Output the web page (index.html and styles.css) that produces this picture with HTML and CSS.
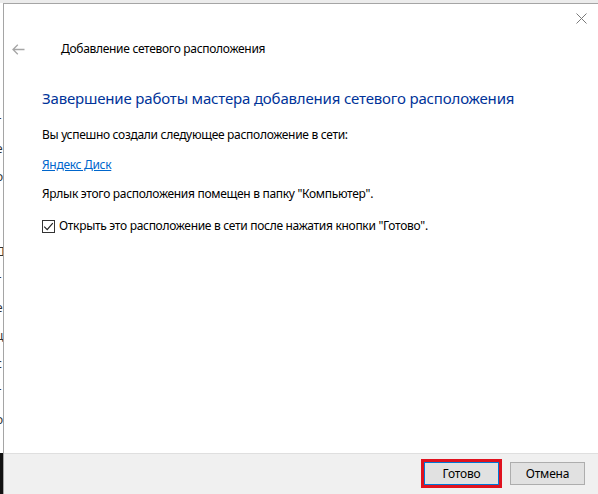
FILE: index.html
```html
<!DOCTYPE html>
<html lang="ru">
<head>
<meta charset="utf-8">
<title>Добавление сетевого расположения</title>
<link rel="stylesheet" href="styles.css">
</head>
<body>
<div class="screen">
  <div class="topstrip"></div>
  <div class="backdrop">
    <div class="backdrop-text">
      <span>г</span><span>е</span><span>о</span>
      <span class="gap">Д</span><span>г</span><span>е</span><span>ц</span><span>с</span><span>г</span><span>о</span>
    </div>
    <div class="taskbar"></div>
  </div>
  <div class="window">
    <div class="topbar">
      <svg class="close" width="11" height="11" viewBox="0 0 11 11" aria-label="Закрыть"><path d="M0.5 0.5 L10.5 10.5 M10.5 0.5 L0.5 10.5" stroke="#7a7a7a" stroke-width="1" fill="none"/></svg>
    </div>
    <div class="nav">
      <svg class="back" width="13" height="11" viewBox="0 0 13 11" aria-label="Назад"><path d="M1 5.5 H12.5 M5.8 0.7 L1 5.5 L5.8 10.3" stroke="#a6a6a6" stroke-width="1.3" fill="none"/></svg>
      <span class="wintitle">Добавление сетевого расположения</span>
    </div>
    <div class="content">
      <h1 class="heading">Завершение работы мастера добавления сетевого расположения</h1>
      <p class="line first">Вы успешно создали следующее расположение в сети:</p>
      <p class="line link-line"><a class="link" href="#">Яндекс Диск</a></p>
      <p class="line">Ярлык этого расположения помещен в папку "Компьютер".</p>
      <label class="check-row">
        <span class="checkbox"><svg width="11" height="11" viewBox="0 0 11 11"><path d="M1.2 5.6 L4.2 8.6 L9.8 2.2" stroke="#222" stroke-width="1.2" fill="none"/></svg></span>
        <span>Открыть это расположение в сети после нажатия кнопки "Готово".</span>
      </label>
    </div>
    <div class="footer">
      <button class="btn btn-default">Готово</button>
      <button class="btn">Отмена</button>
    </div>
  </div>
</div>
</body>
</html>
```

FILE: styles.css
```css
* { box-sizing: border-box; }
html, body { margin: 0; padding: 0; }
body {
  width: 598px;
  height: 494px;
  overflow: hidden;
  font-family: "Noto Sans", "Open Sans", "DejaVu Sans", sans-serif;
  font-size: 12px;
  letter-spacing: -0.3px;
  color: #000;
  background: #fff;
}
.screen {
  display: grid;
  grid-template-columns: 3px 1fr;
  grid-template-rows: 3px 1fr;
  width: 598px;
  height: 494px;
}
.topstrip {
  grid-column: 1 / 3;
  background: #ececec;
}
.backdrop {
  display: flex;
  flex-direction: column;
  overflow: hidden;
  background: #fff;
}
.backdrop-text {
  flex: 1;
  display: flex;
  flex-direction: column;
  padding-top: 104px;
  color: #333;
  font-size: 12px;
  line-height: 28px;
}
.backdrop-text span { margin-left: -4px; }
.backdrop-text .gap { margin-top: 47px; }
.taskbar {
  height: 41px;
  background: #111;
}
.window {
  display: flex;
  flex-direction: column;
  border-left: 1px solid #a5a5a5;
  border-top: 1px solid #a5a5a5;
  background: #fff;
}
.topbar {
  height: 37px;
  display: flex;
  justify-content: flex-end;
  align-items: flex-start;
  padding: 9px 11px 0 0;
}
.nav {
  display: flex;
  align-items: center;
  height: 16px;
  padding-left: 8px;
}
.back { margin-right: 36px; }
.wintitle { line-height: 16px; }
.content {
  padding-left: 38px;
  padding-top: 31px;
}
.heading {
  margin: 0;
  font-size: 15px;
  font-weight: normal;
  letter-spacing: -0.17px;
  line-height: 20px;
  color: #003399;
}
.line {
  margin: 13px 0 0;
  line-height: 16px;
}
.line.first { margin-top: 19px; }
.line.link-line { margin-top: 14px; }
.link { color: #0066cc; text-decoration: underline; }
.check-row {
  display: flex;
  align-items: center;
  gap: 4px;
  margin-top: 16px;
  line-height: 16px;
}
.checkbox {
  width: 13px;
  height: 13px;
  border: 1px solid #333;
  display: flex;
  align-items: center;
  justify-content: center;
  background: #fff;
}
.footer {
  margin-top: auto;
  height: 41px;
  border-top: 1px solid #dfdfdf;
  background: #f0f0f0;
  display: flex;
  justify-content: flex-end;
  align-items: flex-start;
  gap: 11px;
  padding: 8px 13px 0 0;
}
.btn {
  width: 75px;
  height: 23px;
  border: 1px solid #adadad;
  background: #e1e1e1;
  font-family: inherit;
  font-size: 12px;
  letter-spacing: -0.2px;
  color: #000;
  padding: 0;
  line-height: 21px;
}
.btn-default {
  border-color: #0078d7;
  outline: 3px solid #e0121f;
}
```
